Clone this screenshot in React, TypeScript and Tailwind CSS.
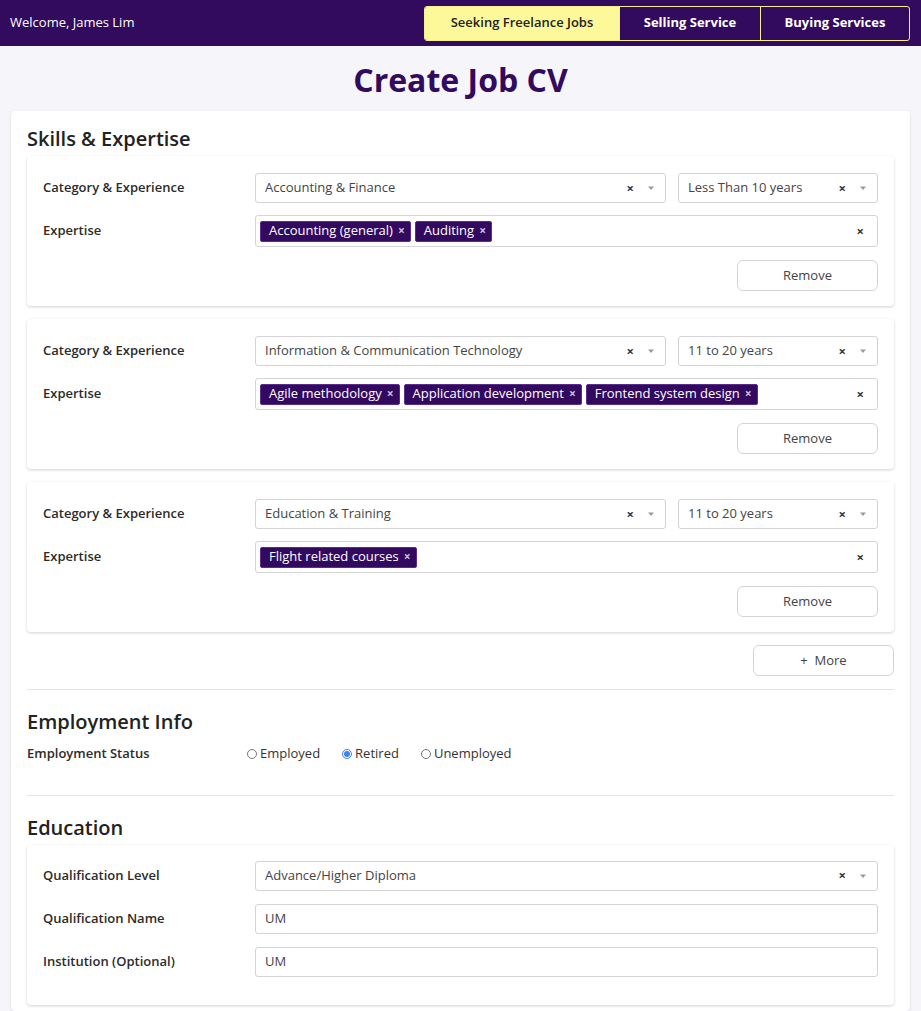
import React from "react";

type Skill = {
  category: string;
  experience: string;
  tags: string[];
};

const skills: Skill[] = [
  { category: "Accounting & Finance", experience: "Less Than 10 years", tags: ["Accounting (general)", "Auditing"] },
  {
    category: "Information & Communication Technology",
    experience: "11 to 20 years",
    tags: ["Agile methodology", "Application development", "Frontend system design"],
  },
  { category: "Education & Training", experience: "11 to 20 years", tags: ["Flight related courses"] },
];

const Caret = () => (
  <svg width="8" height="8" viewBox="0 0 8 8" className="text-[#999]">
    <path d="M1 2.5h6L4 6z" fill="currentColor" />
  </svg>
);

const SelectBox = ({ value, className = "" }: { value: string; className?: string }) => (
  <div
    className={`flex h-[30px] items-center rounded-[3px] border border-[#d4d4d8] bg-white pl-[9px] pr-[10px] text-[13px] text-[#444] ${className}`}
  >
    <span className="flex-1 truncate">{value}</span>
    <span className="mr-[13px] text-[13px] font-bold leading-none text-[#333]">×</span>
    <Caret />
  </div>
);

const Tag = ({ label }: { label: string }) => (
  <span className="flex h-[21px] items-center gap-[5px] rounded-[2px] border border-[#5a2d8c] bg-[#33095f] pl-[8px] pr-[5px] text-[13px] text-white">
    {label}
    <span className="text-[12px] font-bold leading-none text-[#c9c0d6]">×</span>
  </span>
);

const Label = ({ children }: { children: React.ReactNode }) => (
  <div className="w-[212px] shrink-0 text-[13px] font-semibold text-[#2b2b2b]">{children}</div>
);

const SkillCard = ({ skill }: { skill: Skill }) => (
  <div className="rounded-[4px] bg-white px-[16px] pt-[17px] pb-[15px] shadow-[0_1px_3px_rgba(0,0,0,0.18)]">
    <div className="flex items-center">
      <Label>Category & Experience</Label>
      <SelectBox value={skill.category} className="flex-1" />
      <SelectBox value={skill.experience} className="ml-[12px] w-[200px]" />
    </div>
    <div className="mt-[12px] flex items-center">
      <Label>Expertise</Label>
      <div className="flex h-[32px] flex-1 items-center gap-[4px] rounded-[3px] border border-[#d4d4d8] bg-white pl-[4px] pr-[13px]">
        {skill.tags.map((t) => (
          <Tag key={t} label={t} />
        ))}
        <span className="ml-auto text-[13px] font-bold leading-none text-[#333]">×</span>
      </div>
    </div>
    <div className="mt-[13px] flex justify-end">
      <button className="h-[31px] w-[141px] rounded-[6px] border border-[#d4d4d8] bg-white text-[13px] text-[#444]">
        Remove
      </button>
    </div>
  </div>
);

const Radio = ({ label, checked }: { label: string; checked?: boolean }) => (
  <label className="flex items-center gap-[3px] text-[13px] text-[#333]">
    {checked ? (
      <span className="flex h-[10px] w-[10px] items-center justify-center rounded-full border border-[#3b82f6] bg-white">
        <span className="h-[6px] w-[6px] rounded-full bg-[#3b82f6]" />
      </span>
    ) : (
      <span className="h-[10px] w-[10px] rounded-full border border-[#767676] bg-white" />
    )}
    {label}
  </label>
);

const TextInput = ({ value }: { value: string }) => (
  <div className="flex h-[30px] flex-1 items-center rounded-[3px] border border-[#d4d4d8] bg-white px-[9px] text-[13px] text-[#444]">
    {value}
  </div>
);

export default function App() {
  return (
    <div className="min-h-[1011px] bg-[#f5f5fa] font-['Open_Sans',sans-serif]">
      <header className="flex h-[46px] items-center justify-between bg-[#320a5e] pl-[10px] pr-[11px]">
        <span className="text-[13px] text-white">Welcome, James Lim</span>
        <nav className="flex h-[35px] overflow-hidden rounded-[3px] border border-[#f5ee8c]">
          <button className="w-[194px] bg-[#fdf99a] text-[13px] font-semibold text-[#222]">Seeking Freelance Jobs</button>
          <button className="w-[141px] border-l border-[#f5ee8c] text-[13px] font-bold text-white">Selling Service</button>
          <button className="w-[149px] border-l border-[#f5ee8c] text-[13px] font-bold text-white">Buying Services</button>
        </nav>
      </header>

      <h1 className="pt-[12px] pb-[9px] text-center text-[32px] leading-[44px] font-bold text-[#320a5e]">Create Job CV</h1>

      <main className="mx-[11px] rounded-[4px] bg-white px-[16px] pt-[13px] pb-[6px] shadow-[0_1px_3px_rgba(0,0,0,0.12)]">
        <h2 className="text-[20px] leading-[30px] font-semibold text-[#222]">Skills & Expertise</h2>
        <div className="mt-[2px] flex flex-col gap-[13px]">
          {skills.map((s) => (
            <SkillCard key={s.category} skill={s} />
          ))}
        </div>
        <div className="mt-[13px] flex justify-end">
          <button className="h-[31px] w-[141px] rounded-[6px] border border-[#d4d4d8] bg-white text-[13px] text-[#444]">
            +&nbsp;&nbsp;More
          </button>
        </div>

        <hr className="mt-[13px] border-[#e4e4e7]" />

        <h2 className="mt-[17px] text-[20px] leading-[30px] font-semibold text-[#222]">Employment Info</h2>
        <div className="mt-[7px] flex items-center">
          <div className="w-[220px] shrink-0 text-[13px] font-semibold text-[#2b2b2b]">Employment Status</div>
          <div className="flex items-center gap-[22px]">
            <Radio label="Employed" />
            <Radio label="Retired" checked />
            <Radio label="Unemployed" />
          </div>
        </div>

        <hr className="mt-[31px] border-[#e4e4e7]" />

        <h2 className="mt-[17px] text-[20px] leading-[30px] font-semibold text-[#222]">Education</h2>
        <div className="mt-[2px] flex flex-col gap-[13px] rounded-[4px] bg-white px-[16px] pt-[16px] pb-[28px] shadow-[0_1px_3px_rgba(0,0,0,0.18)]">
          <div className="flex items-center">
            <Label>Qualification Level</Label>
            <SelectBox value="Advance/Higher Diploma" className="flex-1" />
          </div>
          <div className="flex items-center">
            <Label>Qualification Name</Label>
            <TextInput value="UM" />
          </div>
          <div className="flex items-center">
            <Label>Institution (Optional)</Label>
            <TextInput value="UM" />
          </div>
        </div>
      </main>
    </div>
  );
}
